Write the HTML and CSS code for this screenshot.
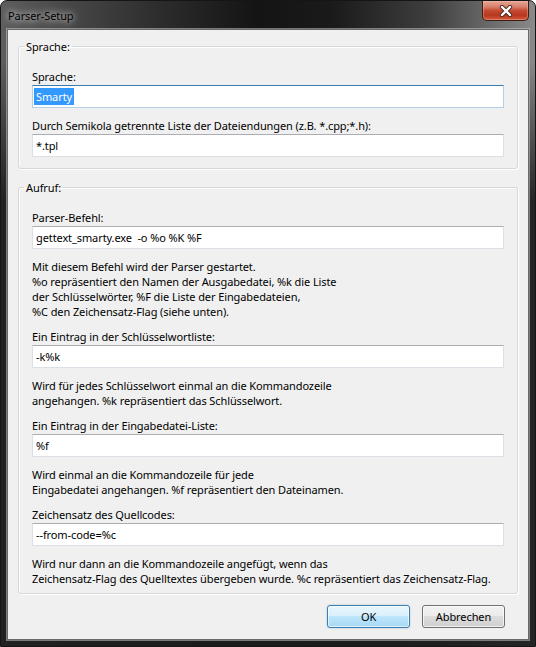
FILE: index.html
```html
<!DOCTYPE html>
<html lang="de">
<head>
<meta charset="utf-8">
<title>Parser-Setup</title>
<link rel="stylesheet" href="styles.css">
</head>
<body>
<div class="window">
  <div class="titlebar">
    <span class="title">Parser-Setup</span>
    <div class="close">
      <svg width="14" height="12" viewBox="0 0 14 12">
        <path d="M3 2 L11 10 M11 2 L3 10" stroke="#4a2a22" stroke-width="4.2" stroke-linecap="round"/>
        <path d="M3 2 L11 10 M11 2 L3 10" stroke="#ffffff" stroke-width="2.4" stroke-linecap="round"/>
      </svg>
    </div>
  </div>
  <div class="client">
    <fieldset class="group">
      <legend>Sprache:</legend>
      <div class="label">Sprache:</div>
      <div class="textbox focused"><span class="sel">Smarty</span></div>
      <div class="label spaced">Durch Semikola getrennte Liste der Dateiendungen (z.B. *.cpp;*.h):</div>
      <div class="textbox">*.tpl</div>
    </fieldset>
    <fieldset class="group second">
      <legend>Aufruf:</legend>
      <div class="label">Parser-Befehl:</div>
      <div class="textbox">gettext_smarty.exe  -o %o %K %F</div>
      <div class="desc">Mit diesem Befehl wird der Parser gestartet.<br>%o repräsentiert den Namen der Ausgabedatei, %k die Liste<br>der Schlüsselwörter, %F die Liste der Eingabedateien,<br>%C den Zeichensatz-Flag (siehe unten).</div>
      <div class="label spaced">Ein Eintrag in der Schlüsselwortliste:</div>
      <div class="textbox">-k%k</div>
      <div class="desc">Wird für jedes Schlüsselwort einmal an die Kommandozeile<br>angehangen. %k repräsentiert das Schlüsselwort.</div>
      <div class="label spaced">Ein Eintrag in der Eingabedatei-Liste:</div>
      <div class="textbox">%f</div>
      <div class="desc">Wird einmal an die Kommandozeile für jede<br>Eingabedatei angehangen. %f repräsentiert den Dateinamen.</div>
      <div class="label spaced">Zeichensatz des Quellcodes:</div>
      <div class="textbox">--from-code=%c</div>
      <div class="desc">Wird nur dann an die Kommandozeile angefügt, wenn das<br>Zeichensatz-Flag des Quelltextes übergeben wurde. %c repräsentiert das Zeichensatz-Flag.</div>
    </fieldset>
    <div class="buttons">
      <div class="button default">OK</div>
      <div class="button">Abbrechen</div>
    </div>
  </div>
</div>
</body>
</html>
```
FILE: styles.css
```css
html, body {
  margin: 0;
  padding: 0;
  background: #ffffff;
}

body {
  font-family: "Noto Sans", "Open Sans", sans-serif;
  font-size: 11px;
  letter-spacing: -0.1px;
  line-height: 15px;
  color: #000;
}

.window {
  width: 536px;
  height: 647px;
  box-sizing: border-box;
  border: 1px solid #151515;
  border-radius: 7px 7px 0 0;
  display: flex;
  flex-direction: column;
  background:
    linear-gradient(180deg, rgba(28,28,28,0) 0px, rgba(28,28,28,0) 60px, rgba(28,28,28,0.92) 200px),
    linear-gradient(90deg, #5e5e5e 0%, #484848 12%, #2c2c2c 30%, #141414 48%, #1a1a1a 62%, #3e3e3e 80%, #8a8a8a 100%);
}

.titlebar {
  height: 28px;
  display: flex;
  justify-content: space-between;
  align-items: flex-start;
  padding-left: 7px;
}

.title {
  margin-top: 7px;
  color: #000;
  line-height: 15px;
  text-shadow: 0 0 6px rgba(255,255,255,0.9), 0 0 12px rgba(255,255,255,0.5);
}

.close {
  width: 45px;
  height: 19px;
  margin-right: 6px;
  border: 1px solid #3b1d16;
  border-top: none;
  border-radius: 0 0 5px 5px;
  box-shadow: inset 0 0 0 1px rgba(255,200,190,0.35);
  background: linear-gradient(180deg, #e3a595 0%, #d9826d 30%, #c54a32 50%, #b83720 75%, #d35a3c 100%);
  display: flex;
  align-items: center;
  justify-content: center;
}

.client {
  flex: 1;
  margin: 0 6px 6px 6px;
  border: 1px solid #6a6a6a;
  box-shadow: 0 0 0 1px rgba(200,200,200,0.55);
  background: #f0f0f0;
  padding: 9px 10px 0 10px;
  display: flex;
  flex-direction: column;
}

.group {
  margin: 0;
  padding: 15px 13px 11px 13px;
  border: 1px solid #d5d8da;
  border-radius: 3px;
  box-shadow: inset 1px 1px 0 #ffffff, 1px 1px 0 #ffffff;
  min-width: 0;
}

.group.second {
  margin-top: 11px;
  padding-bottom: 7px;
}

.group legend {
  margin-left: -8px;
  padding: 0 2px;
  line-height: 15px;
}

.label {
  margin-bottom: 1px;
  white-space: nowrap;
}

.label.spaced {
  margin-top: 10px;
}

.textbox {
  height: 21px;
  border: 1px solid #dbdfe6;
  border-top-color: #abadb3;
  background: #fff;
  padding: 0 3px;
  line-height: 21px;
  white-space: pre;
}

.textbox.focused {
  border-color: #b5cfe7;
  border-top-color: #3d7bad;
  padding-left: 1px;
}

.sel {
  background: #3399ff;
  color: #fff;
  padding: 1px 2px;
}

.desc {
  margin-top: 10px;
  white-space: nowrap;
}

.buttons {
  display: flex;
  justify-content: flex-end;
  gap: 12px;
  margin-top: 11px;
  padding-right: 13px;
}

.button {
  width: 81px;
  height: 21px;
  border: 1px solid #707070;
  border-radius: 3px;
  background: linear-gradient(180deg, #f2f2f2 0%, #ebebeb 49%, #dddddd 50%, #cfcfcf 100%);
  box-shadow: inset 0 0 0 1px rgba(255,255,255,0.7);
  text-align: center;
  line-height: 21px;
}

.button.default {
  border-color: #3c7fb1;
  background: linear-gradient(180deg, #eaf6fd 0%, #d9f0fc 49%, #bee6fd 50%, #a7d9f5 100%);
  box-shadow: inset 0 0 0 1px rgba(255,255,255,0.6), 0 0 2px rgba(60,127,177,0.4);
}
```
